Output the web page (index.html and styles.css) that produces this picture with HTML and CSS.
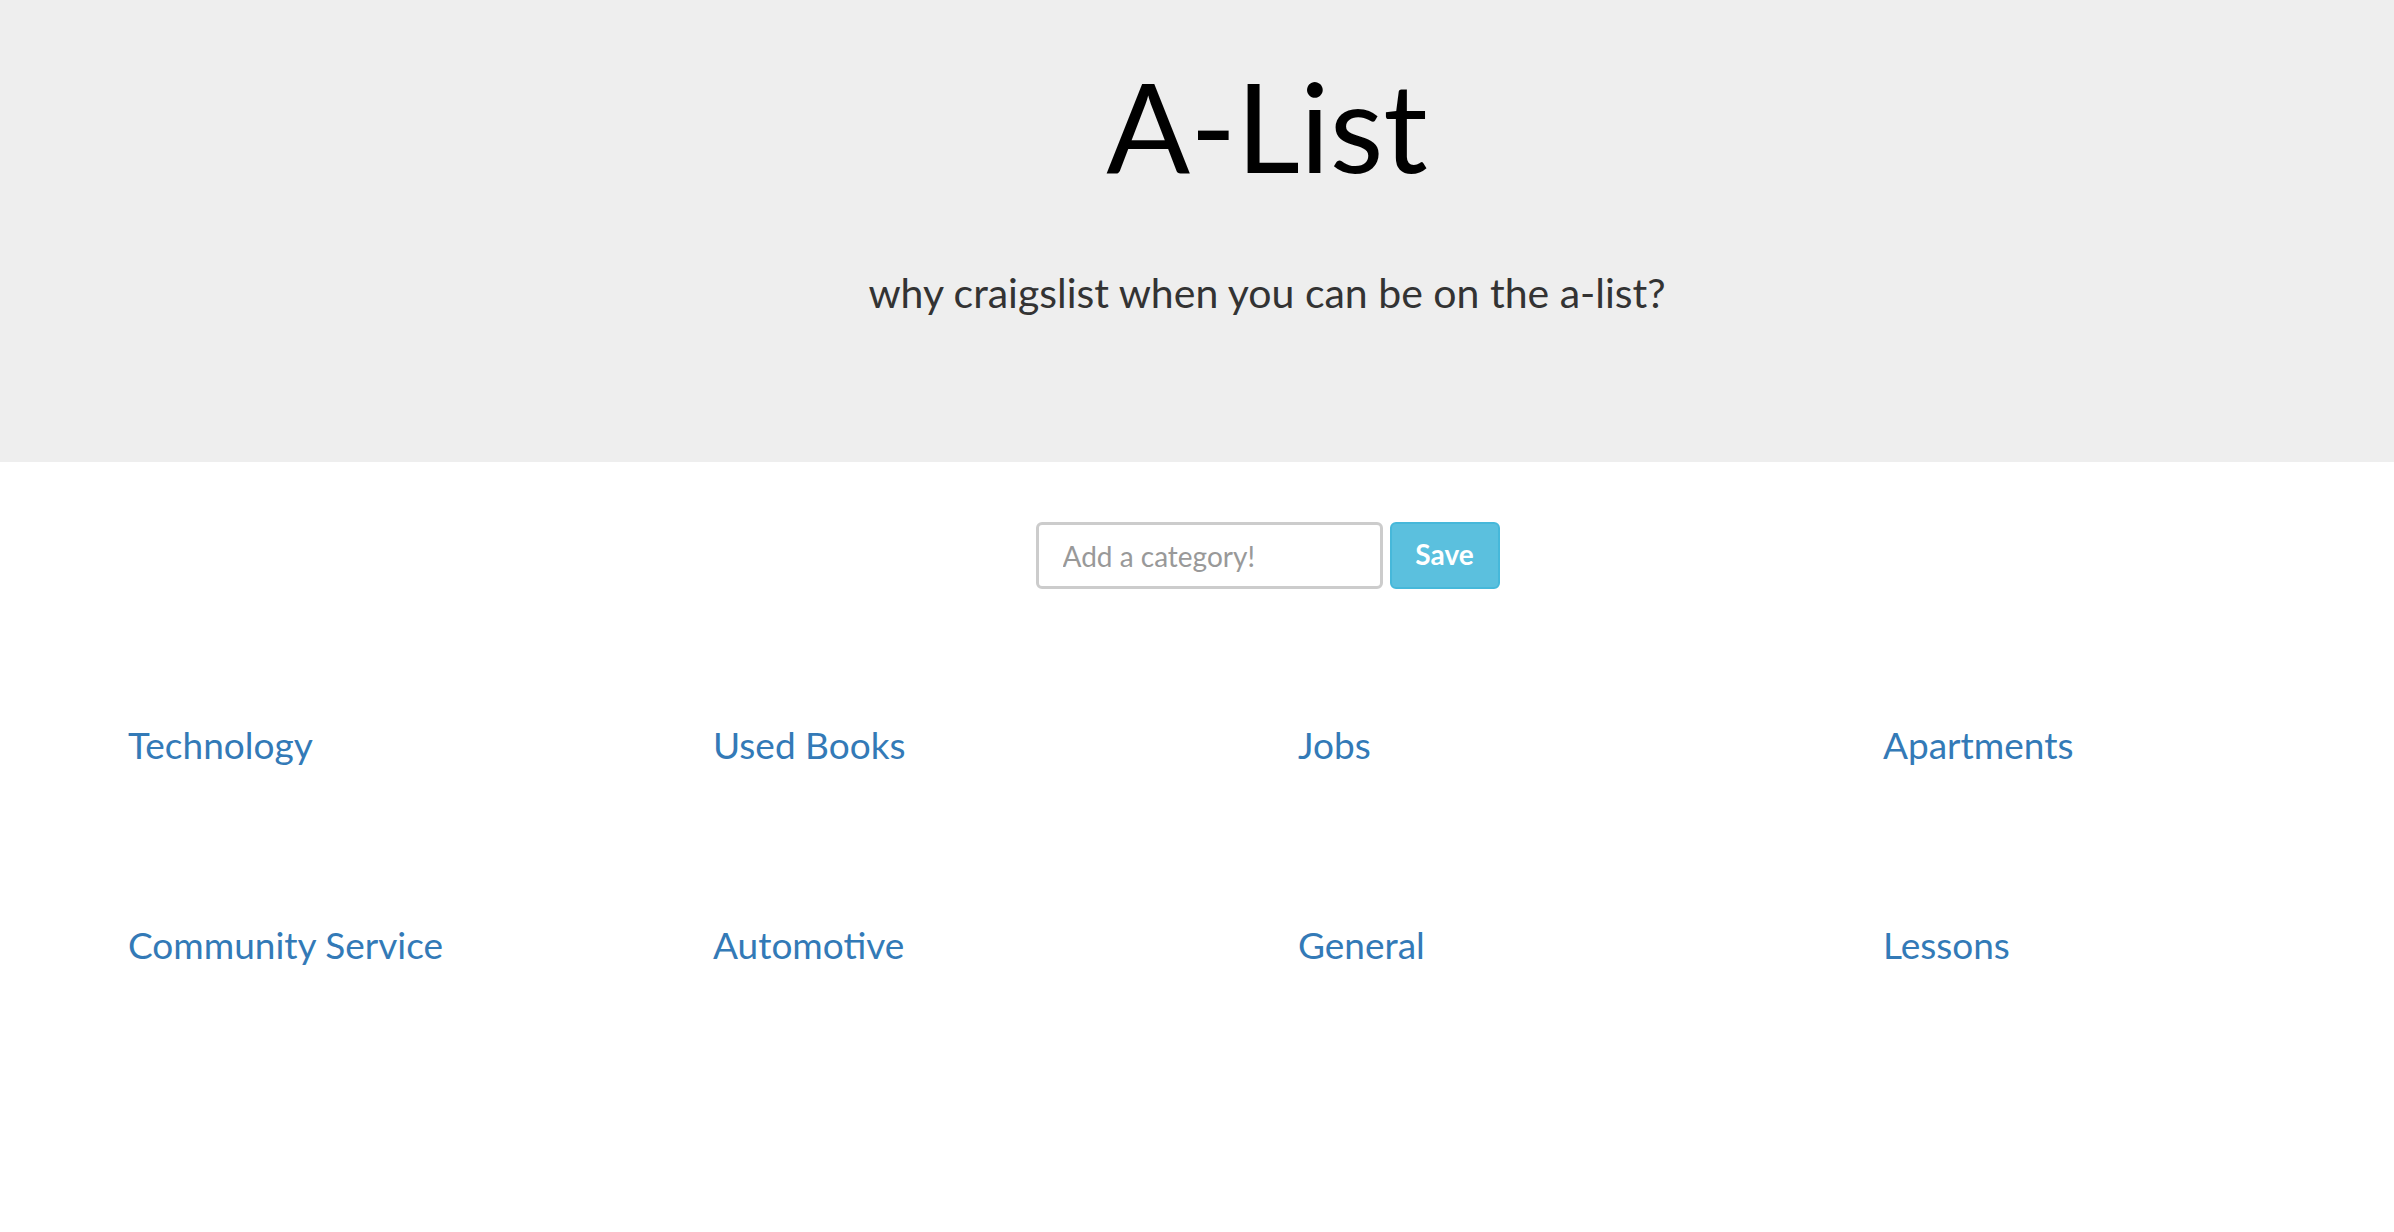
FILE: index.html
```html
<!DOCTYPE html>
<html>
<head>
<meta charset="utf-8">
<title>A-List</title>
<link rel="stylesheet" href="styles.css">
</head>
<body>
<header class="jumbotron">
  <h1 class="title">A-List</h1>
  <p class="tagline">why craigslist when you can be on the a-list?</p>
</header>
<form class="add-form">
  <input class="add-input" type="text" placeholder="Add a category!">
  <button class="save-btn" type="button">Save</button>
</form>
<main class="categories">
  <a class="category" href="#">Technology</a>
  <a class="category" href="#">Used Books</a>
  <a class="category" href="#">Jobs</a>
  <a class="category" href="#">Apartments</a>
  <a class="category" href="#">Community Service</a>
  <a class="category" href="#">Automotive</a>
  <a class="category" href="#">General</a>
  <a class="category" href="#">Lessons</a>
</main>
</body>
</html>
```
FILE: styles.css
```css
html, body {
  margin: 0;
  padding: 0;
  background: #fff;
}
body {
  font-family: Lato, "Open Sans", sans-serif;
  color: #333;
}
.jumbotron {
  background: #eee;
  height: 462px;
  box-sizing: border-box;
  padding-top: 50px;
  padding-left: 140px;
  display: flex;
  flex-direction: column;
  align-items: center;
}
.title {
  margin: 0;
  font-family: Lato, sans-serif;
  font-weight: 400;
  font-size: 124px;
  line-height: 150px;
  color: #000;
}
.tagline {
  margin: 68px 0 0 0;
  font-size: 41px;
  line-height: 50px;
  color: #333;
}
.add-form {
  display: flex;
  justify-content: center;
  gap: 7px;
  margin-top: 60px;
  padding-left: 141px;
}
.add-input {
  box-sizing: border-box;
  width: 347px;
  height: 67px;
  border: 3px solid #ccc;
  border-radius: 6px;
  padding: 0 24px;
  font-family: Lato, sans-serif;
  font-size: 28px;
  color: #555;
  background: #fff;
}
.add-input::placeholder {
  color: #999;
}
.save-btn {
  box-sizing: border-box;
  width: 110px;
  height: 67px;
  border: 2px solid #46b8da;
  border-radius: 6px;
  background: #5bc0de;
  color: #fff;
  font-family: Lato, sans-serif;
  font-weight: 700;
  font-size: 28px;
  padding: 0 0 4px 0;
}
.categories {
  display: grid;
  grid-template-columns: repeat(4, 585px);
  grid-auto-rows: 200px;
  padding-left: 128px;
  margin-top: 131px;
}
.category {
  font-size: 37px;
  line-height: 50px;
  color: #337ab7;
  text-decoration: none;
}
```
